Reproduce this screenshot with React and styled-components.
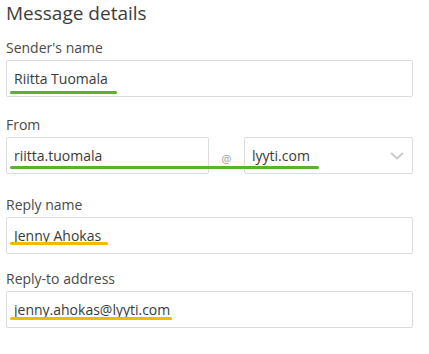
import React from 'react'
import styled, { createGlobalStyle } from 'styled-components'

const Global = createGlobalStyle`
  body {
    margin: 0;
    background: #fff;
    font-family: "Open Sans", "Noto Sans", sans-serif;
    color: #444;
  }
`

const Page = styled.div`
  width: 407px;
  padding: 0 16px 0 6px;
`

const Title = styled.h2`
  margin: 0 0 12px;
  font-size: 19px;
  line-height: 26px;
  font-weight: 400;
  color: #3d3d3d;
`

const Group = styled.div`
  margin-bottom: ${p => p.$gap}px;
`

const Label = styled.div`
  font-size: 14px;
  line-height: 20px;
  margin-bottom: 2px;
  color: #4a4a4a;
`

const Field = styled.div`
  position: relative;
  display: flex;
  align-items: center;
`

const Box = styled.div`
  box-sizing: border-box;
  height: 37px;
  flex: ${p => (p.$w ? `0 0 ${p.$w}px` : '1')};
  border: 1px solid #dcdcdc;
  border-radius: 2px;
  display: flex;
  align-items: center;
  justify-content: space-between;
  padding: 0 8px 0 7px;
  font-size: 14px;
  color: #3a3a3a;
`

const At = styled.span`
  flex: 0 0 35px;
  text-align: center;
  font-size: 11px;
  color: #9a9a9a;
  padding-top: 6px;
`

const Mark = styled.span`
  position: absolute;
  left: ${p => p.$left}px;
  top: ${p => p.$top}px;
  width: ${p => p.$w}px;
  height: 3px;
  border-radius: 2px;
  background: ${p => (p.$tone === 'green' ? '#5bb132' : '#f5b800')};
`

const Chevron = () => (
  <svg width="14" height="8" viewBox="0 0 14 8" fill="none">
    <path d="M1 1l6 5.5L13 1" stroke="#c9c9c9" strokeWidth="2" />
  </svg>
)

export default function App() {
  return (
    <Page>
      <Global />
      <Title>Message details</Title>

      <Group $gap={18}>
        <Label>Sender's name</Label>
        <Field>
          <Box>Riitta Tuomala</Box>
          <Mark $tone="green" $left={4} $top={31} $w={107} />
        </Field>
      </Group>

      <Group $gap={21}>
        <Label>From</Label>
        <Field>
          <Box $w={203}>riitta.tuomala</Box>
          <At>@</At>
          <Box>
            lyyti.com
            <Chevron />
          </Box>
          <Mark $tone="green" $left={4} $top={29} $w={309} />
        </Field>
      </Group>

      <Group $gap={15}>
        <Label>Reply name</Label>
        <Field>
          <Box>Jenny Ahokas</Box>
          <Mark $tone="yellow" $left={4} $top={25} $w={98} />
        </Field>
      </Group>

      <Group $gap={0}>
        <Label>Reply-to address</Label>
        <Field>
          <Box>jenny.ahokas@lyyti.com</Box>
          <Mark $tone="yellow" $left={4} $top={26} $w={162} />
        </Field>
      </Group>
    </Page>
  )
}
